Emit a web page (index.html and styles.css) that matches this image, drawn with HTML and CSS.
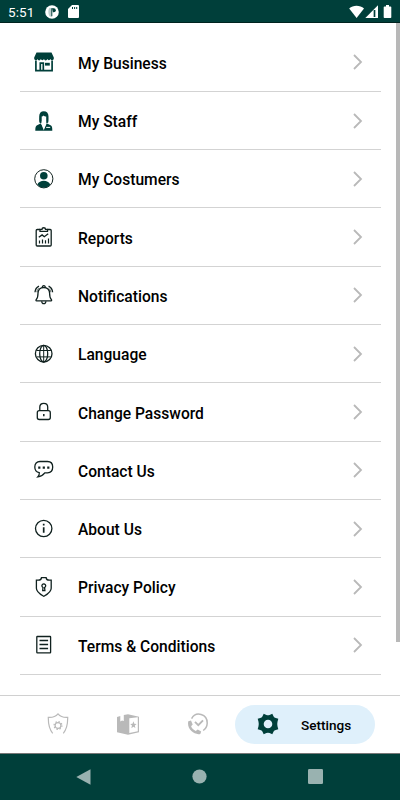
FILE: index.html
```
<!DOCTYPE html>
<html lang="en">
<head>
    <meta charset="UTF-8">
    <meta name="viewport" content="width=device-width, initial-scale=1.0">
    <title>Settings</title>
    <link rel="stylesheet" href="styles.css">
</head>
<body>
    <svg class="sprite" width="0" height="0">
        <symbol id="chevron" viewBox="0 0 10 16">
            <path d="M1 1l7 7-7 7" fill="none" stroke="#b9b9b9" stroke-width="1.8"/>
        </symbol>
    </svg>
    <header class="status-bar">
        <span class="time">5:51</span>
        <svg class="app-dot" width="14" height="14" viewBox="0 0 14 14">
            <circle cx="7" cy="7" r="6.8" fill="#fff"/>
            <path d="M4.4 2.800Q2.200 7 4.400 11.200L6.600 12V3.200z" fill="#003f3a" fill-opacity=".25"/>
            <path d="M6.800 3.200v8" stroke="#003f3a" stroke-width="1"/>
            <path d="M7 3.200h1.800a2 2 0 0 1 0 4H8z" fill="#003f3a"/>
        </svg>
        <svg class="sd-card" width="11" height="13" viewBox="0 0 11 13">
            <path d="M4 0h6a1 1 0 0 1 1 1v11a1 1 0 0 1-1 1H1a1 1 0 0 1-1-1V4z" fill="#fff"/>
            <path d="M4.500 2v2M6.600 2v2M8.700 2v2" stroke="#003f3a" stroke-width="1"/>
        </svg>
        <svg class="signals" width="44" height="14" viewBox="0 0 44 14">
            <path d="M.2 3.600C4-.2 11-.2 15 3.600L7.600 13z" fill="#fff"/>
            <path d="M29 .3V13H16.300z" fill="#fff"/>
            <path d="M25.500 5v7" stroke="#003f3a" stroke-width="1.700"/>
            <path d="M37 0h3v1.500h1.500a.8.8 0 0 1 .8.8v10a.8.8 0 0 1-.8.8h-6a.8.8 0 0 1-.8-.8v-10a.8.8 0 0 1 .8-.8H37z" fill="#fff"/>
        </svg>
    </header>

    <main class="content">
        <ul class="menu">
            <li class="menu-item">
                <svg class="icon" viewBox="0 0 20 20">
                    <path d="M2.500.5h15l2.300 5v1.300a1.700 1.700 0 0 1-3.300.3 1.700 1.700 0 0 1-3.200 0 1.700 1.700 0 0 1-3.300 0 1.700 1.700 0 0 1-3.200 0 1.700 1.700 0 0 1-3.300 0A1.700 1.700 0 0 1 .2 6.800V5.500z" fill="#003f3a"/>
                    <path d="M1.900 8.500v10.200h16.200V8.500M6.300 18.500v-7.300h3v7.300" fill="none" stroke="#003f3a" stroke-width="1.700"/>
                    <path d="M11 10.800h4.800v2.800H11z" fill="#003f3a"/>
                </svg>
                <span class="label">My Business</span>
                <svg class="chevron"><use href="#chevron"/></svg>
            </li>
            <li class="menu-item">
                <svg class="icon" viewBox="0 0 20 20">
                    <path d="M5.400 11.500C5 9.500 5.200 7.500 5.200 5.300 5.200 2.100 7 .2 9.800.2s4.700 1.900 4.700 5.100c0 2.200.2 4.200-.3 6.200-.8.500-1.300.700-2 .600V5.600c-1.200-.2-2-.5-2.600-1.200-.5.600-1.200 1-1.900 1.200v6.500c-.8.100-1.600-.1-2.300-.6z" fill="#003f3a"/>
                    <path d="M7 12.300l2.800 6.900 2.800-6.900 4.400 2.100c1.100.6 1.300 2.300 1.300 5.300h-17c0-3 .3-4.700 1.400-5.300z" fill="#003f3a"/>
                    <path d="M7.600 10.500v2.700l2.300 4.600 2.200-4.600v-2.700z" fill="#fff"/>
                    <path d="M12.200 16.400h4" stroke="#fff" stroke-width="1"/>
                </svg>
                <span class="label">My Staff</span>
                <svg class="chevron"><use href="#chevron"/></svg>
            </li>
            <li class="menu-item">
                <svg class="icon" viewBox="0 0 20 20">
                    <circle cx="9.800" cy="9.800" r="9.100" fill="none" stroke="#11221f" stroke-width="1"/>
                    <circle cx="9.800" cy="6.700" r="3.800" fill="#003f3a"/>
                    <path d="M3.300 15.500c1.300-2.600 3.800-3.800 6.500-3.800s5.200 1.200 6.500 3.800c-1.500 2-4 3.300-6.500 3.300s-5-1.300-6.500-3.300z" fill="#003f3a"/>
                </svg>
                <span class="label">My Costumers</span>
                <svg class="chevron"><use href="#chevron"/></svg>
            </li>
            <li class="menu-item">
                <svg class="icon line" viewBox="0 0 20 20">
                    <path d="M6 2.500H3.200a1 1 0 0 0-1 1V18a1 1 0 0 0 1 1h13a1 1 0 0 0 1-1V3.500a1 1 0 0 0-1-1H13.500"/>
                    <path d="M6 4.300V2.300h2C8 .2 11.500.2 11.500 2.300h2v2z"/>
                    <path d="M4.800 10.300l3.300-2.400 2.200 1.800 3.900-2.900" stroke-width="1.400"/>
                    <path d="M5.500 13.500v3M8.500 12.500v4M11.500 13.300v3.200M14.500 11.500v5" stroke-width="1.200"/>
                </svg>
                <span class="label">Reports</span>
                <svg class="chevron"><use href="#chevron"/></svg>
            </li>
            <li class="menu-item">
                <svg class="icon line" viewBox="0 0 20 20">
                    <path d="M2.600 15.900h14.400c.8 0 .8-1 .3-1.500-1.500-1.400-1.700-2.600-1.700-6.100 0-3.600-2.300-5.800-5.800-5.800S4 4.700 4 8.300c0 3.500-.2 4.700-1.700 6.100-.5.500-.5 1.500.3 1.500z"/>
                    <path d="M8.300 2.600c-.3-2.600 3.300-2.600 3 0M7.700 16.200c.2 3.300 4 3.300 4.200 0M1 7.300C1.200 4.500 2.700 2.300 5 1.200M18.600 7.300c-.2-2.800-1.700-5-4-6.100"/>
                    <path d="M2.800 7.200c.1-1.800 1-3.200 2.200-4M16.800 7.200c-.1-1.800-1-3.200-2.200-4" stroke-width=".6"/>
                </svg>
                <span class="label">Notifications</span>
                <svg class="chevron"><use href="#chevron"/></svg>
            </li>
            <li class="menu-item">
                <svg class="icon line" viewBox="0 0 20 20">
                    <circle cx="9.700" cy="9.700" r="8.300"/>
                    <ellipse cx="9.700" cy="9.700" rx="4" ry="8.300"/>
                    <path d="M9.700 1.400V18M2.500 6.500h14.400M2.500 12.900h14.400" stroke-width="1"/>
                </svg>
                <span class="label">Language</span>
                <svg class="chevron"><use href="#chevron"/></svg>
            </li>
            <li class="menu-item">
                <svg class="icon line" viewBox="0 0 20 20">
                    <rect x="3.300" y="8.700" width="13" height="8.800" rx="2"/>
                    <path d="M5.800 8.500V4.900c0-4.800 7.900-4.800 7.900 0v3.600"/>
                    <path d="M9.800 12v2.300" stroke-width="1.500"/>
                </svg>
                <span class="label">Change Password</span>
                <svg class="chevron"><use href="#chevron"/></svg>
            </li>
            <li class="menu-item">
                <svg class="icon line" viewBox="0 0 20 20">
                    <path d="M6 1.500h7.500c3.300 0 5.200 2.200 5.200 5.600s-1.900 5.700-5.200 5.700h-2.700c-1.800 2.300-4 3.700-6.900 4 1-1 1.500-2.400 1.400-4.100C2.600 12.300.8 10.200.8 7.100.8 3.700 2.700 1.500 6 1.500z"/>
                    <path d="M4.200 7.600h2.200M8.700 7.600h2.200M13.200 7.600h2.200" stroke-width="2.200"/>
                </svg>
                <span class="label">Contact Us</span>
                <svg class="chevron"><use href="#chevron"/></svg>
            </li>
            <li class="menu-item">
                <svg class="icon line" viewBox="0 0 20 20">
                    <circle cx="9.700" cy="9.500" r="8.200"/>
                    <path d="M9.700 8.300v5.500M9.700 4.800v1.700" stroke-width="1.700"/>
                </svg>
                <span class="label">About Us</span>
                <svg class="chevron"><use href="#chevron"/></svg>
            </li>
            <li class="menu-item">
                <svg class="icon line" viewBox="0 0 20 20">
                    <path d="M7.500.6h4.600c.2 1.700 1.500 2.600 3.200 2.600h1.900v8c0 4-3.800 6-7.400 8.100C6.200 17.200 2.400 15.200 2.400 11.200v-8h1.900C6 3.200 7.300 2.300 7.500.6z"/>
                    <path d="M9 10.500a1.900 1.900 0 1 1 1.600 0l.3 3.200H8.700z"/>
                </svg>
                <span class="label">Privacy Policy</span>
                <svg class="chevron"><use href="#chevron"/></svg>
            </li>
            <li class="menu-item">
                <svg class="icon line" viewBox="0 0 20 20">
                    <rect x="2.800" y="1.500" width="13.800" height="16.400" rx=".6"/>
                    <path d="M5.500 5.500h8.600M5.500 9.500h8.600M5.500 13.500h8.600"/>
                </svg>
                <span class="label">Terms &amp; Conditions</span>
                <svg class="chevron"><use href="#chevron"/></svg>
            </li>
        </ul>
        <div class="scrollbar"></div>
    </main>

    <nav class="tabs">
        <svg class="tab-shield" width="22" height="22" viewBox="0 0 22 22">
            <path d="M5.700 20.300C2.600 16.700 1.200 11 1.300 4.400 5 4.700 8.500 3.800 11 .9c2.500 2.900 6 3.800 9.700 3.500.1 6.600-1.300 12.300-4.400 15.900" fill="none" stroke="#b9b9b9" stroke-width="1.200"/>
            <circle cx="11" cy="12.500" r="2.900" fill="none" stroke="#b9b9b9" stroke-width="1.200"/>
            <circle cx="11" cy="12.500" r="3.900" fill="none" stroke="#b9b9b9" stroke-width="1.300" stroke-dasharray="1.400 1.663"/>
        </svg>
        <svg class="tab-box" width="22" height="21" viewBox="0 0 22 21">
            <path d="M0 2.900l3.300-.9v5.400l1.700-.9 1.800.5V1.100L11 .2l11 2.500v15.500L11 20.700 0 18.200z" fill="#b9b9b9"/>
            <path d="M12.300 4.300l8.500-1v14l-8.500 1.800z" fill="#fff"/>
            <path d="M16.400 7.300l.9 2.400 2.300.2-1.800 1.600.6 2.600-2-1.400-2.100 1.500.7-2.700-1.800-1.600 2.300-.1z" fill="#b9b9b9"/>
        </svg>
        <svg class="tab-call" width="22" height="22" viewBox="0 0 22 22">
            <path d="M4.600 5.600C9-2.200 20.400 1 20.200 10.300c-.1 3-1.600 5.500-4 7.200" fill="none" stroke="#b9b9b9" stroke-width="1.500"/>
            <path d="M1.300 8.300L4 7.600l1.700 4-1.600 1.700c.7 1.900 2.500 3.800 4.600 4.600l2-1.400 3.500 2.100-.9 2.300C7.600 22.500-.6 16 1.300 8.300z" fill="#b9b9b9"/>
            <path d="M8 8.900l3.300 3.200L16 7.300" fill="none" stroke="#b9b9b9" stroke-width="1.900"/>
        </svg>
        <div class="tab-active">
            <svg width="22" height="22" viewBox="0 0 22 22">
                <path d="M6.700.8l2.700 1.100q1.600.7 3.200 0L15.300.8 16.600 3.500q.6 1.300 2.200 1.500l2.500.8-.8 3q-.5 2.200 0 4.400l.8 3-2.500.8q-1.600.2-2.200 1.500l-1.300 2.700-2.700-1.100q-1.600-.7-3.200 0l-2.700 1.100-1.300-2.700Q4.800 17.200 3.200 17L.7 16.200l.8-3q.5-2.200 0-4.400l-.8-3L3.200 5Q4.800 4.800 5.400 3.500zM11 6.700a4.300 4.300 0 1 0 0 8.600 4.300 4.300 0 1 0 0-8.600z" fill="#003f3a" fill-rule="evenodd"/>
            </svg>
            <span>Settings</span>
        </div>
    </nav>

    <footer class="system-nav">
        <svg width="15" height="16" viewBox="0 0 15 16"><path d="M.3 8L14.500.3v15.400z" fill="#99b2b0"/></svg>
        <svg width="15" height="15" viewBox="0 0 15 15"><circle cx="7.500" cy="7.500" r="7.100" fill="#99b2b0"/></svg>
        <svg width="15" height="15" viewBox="0 0 15 15"><rect width="15" height="15" rx="1.200" fill="#99b2b0"/></svg>
    </footer>
</body>
</html>
```
FILE: styles.css
```
* {
    box-sizing: border-box;
}

body {
    margin: 0;
    width: 400px;
    height: 800px;
    display: flex;
    flex-direction: column;
    overflow: hidden;
    background-color: #fff;
    color: #000;
    font-family: Roboto, sans-serif;
    position: relative;
}

svg {
    display: block;
    flex: none;
}

.sprite {
    position: absolute;
}

.status-bar {
    height: 23px;
    flex: none;
    display: flex;
    align-items: center;
    padding: 1px 7px 0 8px;
    background-color: #003f3a;
    border-bottom: 1px solid #00231f;
    color: #fff;
}

.time {
    width: 37px;
    font-size: 13.5px;
    letter-spacing: 0.1px;
}

.sd-card {
    margin-left: 9px;
}

.signals {
    margin-left: auto;
}

.content {
    height: 672px;
    flex: none;
    display: flex;
    padding: 10.6px 0 0 19.5px;
}

.menu {
    width: 361px;
    margin: 0;
    padding: 0;
    list-style: none;
}

.menu-item {
    height: 58.3px;
    display: flex;
    align-items: center;
    padding: 0 17.5px 0 14px;
    border-bottom: 1px solid #d3d3d3;
}

.icon {
    width: 20px;
    height: 20px;
}

.line {
    fill: none;
    stroke: #10211f;
    stroke-width: 1.3;
}

.label {
    flex: 1;
    margin-left: 24.5px;
    padding-top: 3px;
    font-size: 15.6px;
    font-weight: 500;
}

.chevron {
    width: 10px;
    height: 16px;
}

.scrollbar {
    width: 4px;
    height: 619px;
    margin: -10.6px 0 0 auto;
    background-color: #b8b8b8;
}

.tabs {
    height: 59px;
    flex: none;
    display: flex;
    align-items: center;
    padding: 0 25px 0 47px;
    border-top: 1px solid #d0d0d0;
    border-bottom: 1px solid #777;
}

.tab-box,
.tab-call {
    margin-left: 48px;
}

.tab-shield,
.tab-box,
.tab-call {
    margin-bottom: 1px;
}

.tab-active {
    width: 140px;
    height: 39px;
    display: flex;
    align-items: center;
    margin-left: auto;
    padding: 0 0 1px 22px;
    border-radius: 20px;
    background-color: #dff0fb;
    font-size: 13.6px;
    font-weight: 500;
}

.tab-active span {
    margin-left: 22px;
    padding-top: 1px;
}

.system-nav {
    flex: 1;
    display: flex;
    align-items: center;
    justify-content: space-between;
    padding: 0 77px 1px 76px;
    background-color: #003f3a;
}
```
